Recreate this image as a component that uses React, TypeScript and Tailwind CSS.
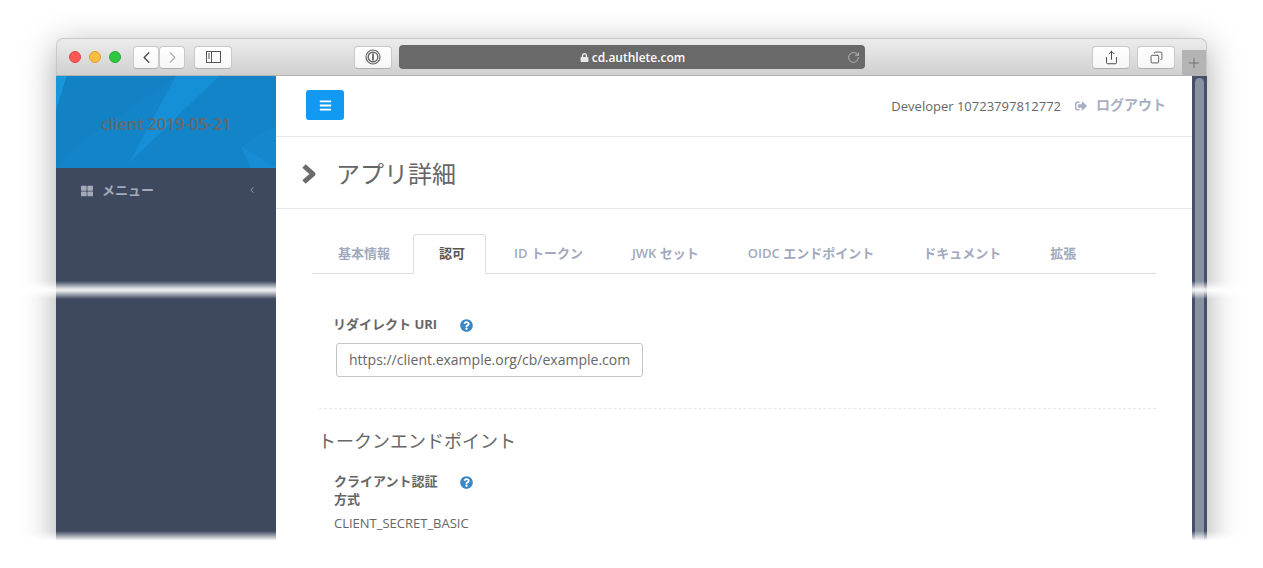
import { ChevronLeft, ChevronRight, RotateCw, Share, Copy, Plus } from "lucide-react";
import { FaBars, FaLock, FaQuestionCircle, FaSignOutAlt, FaThLarge } from "react-icons/fa";

const font = "font-['Open_Sans','Noto_Sans_CJK_JP',sans-serif]";

function ToolButton({ className, children }: { className: string; children: React.ReactNode }) {
  return (
    <div className={`h-[23px] shrink-0 flex items-center justify-center rounded-[4px] bg-[linear-gradient(#ffffff,#f6f6f6)] border border-[#c9c9c9] border-b-[#b0b0b0] ${className}`}>
      {children}
    </div>
  );
}

function Toolbar() {
  return (
    <div className="h-[38px] shrink-0 flex items-center rounded-t-[7px] border-t border-x border-[#c8c8c8] border-b border-b-[#b2b2b2] bg-[linear-gradient(#ececec,#d0d0d0)] relative">
      <div className="ml-[12px] flex gap-2">
        <span className="w-3 h-3 rounded-full bg-[#fc5753] border border-[#df4744]" />
        <span className="w-3 h-3 rounded-full bg-[#fdbc40] border border-[#de9f34]" />
        <span className="w-3 h-3 rounded-full bg-[#2ec840] border border-[#27aa35]" />
      </div>
      <div className="ml-[12px] flex">
        <ToolButton className="w-[26px]"><ChevronLeft size={19} strokeWidth={1.6} color="#444" /></ToolButton>
        <ToolButton className="w-[26px]"><ChevronRight size={19} strokeWidth={1.4} color="#aaa" /></ToolButton>
      </div>
      <ToolButton className="ml-[9px] w-[38px]">
        <svg width="15" height="12" viewBox="0 0 15 12" fill="none" stroke="#555">
          <rect x="0.5" y="0.5" width="14" height="11" />
          <path d="M5.5 0.5V11.5M2 3H4M2 5H4M2 7H4" />
        </svg>
      </ToolButton>
      <ToolButton className="ml-[122px] w-[38px]">
        <svg width="16" height="16" viewBox="0 0 16 16" fill="none" stroke="#666">
          <circle cx="8" cy="8" r="7" strokeWidth="1.2" />
          <circle cx="8" cy="8" r="4.8" strokeWidth="1.4" />
          <path d="M8 4.6V11.4" strokeWidth="1.8" />
        </svg>
      </ToolButton>
      <div className="ml-[7px] w-[466px] h-[24px] shrink-0 rounded-[4px] bg-[#696969] flex items-center text-white">
        <div className="flex-1 flex items-center justify-center gap-[3px] pl-[19px] pt-[1px]">
          <FaLock size={9} color="#e8e8e8" />
          <span className={`text-[12px] font-semibold ${font}`}>cd.authlete.com</span>
        </div>
        <RotateCw size={13} strokeWidth={1.3} color="#cfcfcf" className="mr-[5px]" />
      </div>
      <ToolButton className="ml-[227px] w-[38px]"><Share size={15} strokeWidth={1.4} color="#333" /></ToolButton>
      <ToolButton className="ml-[7px] w-[38px]"><Copy size={13} strokeWidth={1.4} color="#333" className="-scale-x-100" /></ToolButton>
      <div className="ml-[7px] mt-[12px] w-[24px] h-[26px] shrink-0 bg-[#b4b4b4] flex items-center justify-center">
        <Plus size={16} strokeWidth={1} color="#555" />
      </div>
    </div>
  );
}

function Sidebar() {
  return (
    <aside className="w-[220px] shrink-0 bg-[#3e495f] flex flex-col">
      <div className="h-[92px] bg-[#1484c8] relative flex items-center justify-center">
        <svg className="absolute inset-0" width="220" height="92" viewBox="0 0 220 92">
          <polygon points="0,0 11,0 0,34" fill="#1896dc" />
          <polygon points="120,0 163,0 73,87" fill="#1590d8" />
          <polygon points="220,50 185,70 220,92" fill="#1588cd" />
          <polygon points="185,70 220,92 195,92" fill="#168dd5" />
          <polygon points="11,0 0,34 0,92 20,70 120,0" fill="#1382c5" />
        </svg>
        <span className={`relative text-[16px] font-semibold text-[#686868] mt-[4px] ${font}`}>client 2019-05-21</span>
      </div>
      <div className="h-[46px] flex items-center pl-[25px] pr-[19px]">
        <FaThLarge size={12} color="#a3aab8" />
        <span className={`ml-[9px] text-[13px] font-semibold text-[#a3aab8] ${font}`}>メニュー</span>
        <ChevronLeft size={10} color="#a3aab8" className="ml-auto -mt-[3px]" />
      </div>
    </aside>
  );
}

const tabs = ["基本情報", "認可", "ID トークン", "JWK セット", "OIDC エンドポイント", "ドキュメント", "拡張"];

function Tabs() {
  return (
    <div className="ml-[36px] mr-[36px] mt-[25px] h-[40px] flex pl-[1px] border-b border-[#dddddd]">
      {tabs.map((t) =>
        t === "認可" ? (
          <div key={t} className={`h-[40px] -ml-[1px] mr-[3px] pl-[25px] pr-[20px] flex items-center rounded-t-[4px] border border-[#dddddd] border-b-white bg-white text-[13px] font-semibold text-[#555555] ${font}`}>{t}</div>
        ) : (
          <div key={t} className={`h-[39px] pl-[25px] pr-[21px] mr-[3px] flex items-center text-[13px] font-semibold text-[#a2a9bd] ${font}`}>{t}</div>
        )
      )}
    </div>
  );
}

function Help({ className }: { className: string }) {
  return <FaQuestionCircle size={13} color="#3b87c8" className={className} />;
}

export default function App() {
  return (
    <div className={`relative w-[1263px] h-[568px] overflow-hidden bg-white ${font}`}>
      <div className="mt-[38px] ml-[56px] w-[1151px] h-[530px] flex flex-col shadow-[0_8px_34px_rgba(0,0,0,0.34)] rounded-t-[7px] bg-white">
        <Toolbar />
        <div className="flex flex-1 min-h-0">
          <Sidebar />
          <main className="flex-1 min-w-0 bg-white">
            <header className="h-[61px] flex items-center border-b border-[#e7e7e7] pl-[30px] pr-[26px]">
              <div className="w-[38px] h-[30px] -mt-[2px] rounded-[3px] bg-[#129af2] flex items-center justify-center">
                <FaBars size={13} color="#fff" />
              </div>
              <span className="ml-auto text-[13px] text-[#666666] mt-[1px]">Developer 10723797812772</span>
              <FaSignOutAlt size={12} color="#a8afc2" className="ml-[14px] -mt-[1px]" />
              <span className="ml-[9px] text-[14px] font-semibold text-[#a8afc2] -mt-[3px]">ログアウト</span>
            </header>
            <div className="h-[72px] flex items-center border-b border-[#e7e7e7] pl-[25px]">
              <svg width="16" height="22" viewBox="0 0 16 22" fill="none" stroke="#6b6b6b" strokeWidth="5" strokeLinejoin="round" className="mt-[3px]">
                <path d="M3 3L12 11L3 19" />
              </svg>
              <h1 className="ml-[19px] mt-[3px] text-[24px] font-normal text-[#666666] leading-none">アプリ詳細</h1>
            </div>
            <Tabs />
            <div className="pl-[43px] pr-[36px]">
              <div className="mt-[41px] pl-[15px] flex items-start">
                <span className="w-[126px] -ml-[1px] text-[13px] font-bold text-[#666666] leading-[18px]">リダイレクト URI</span>
                <Help className="mt-[4px] ml-[1px]" />
              </div>
              <div className="mt-[10px] ml-[17px] w-[307px] h-[34px] rounded-[3px] border border-[#c4c4c4] flex items-center pl-[12px] pb-[1px] text-[14px] text-[#666666]">
                https://client.example.org/cb/example.com
              </div>
              <div className="mt-[31px] border-t border-dashed border-[#e8e8e8]" />
              <h2 className="mt-[20px] -ml-[1px] text-[18px] font-normal leading-[24px] text-[#666666]">トークンエンドポイント</h2>
              <div className="mt-[19px] pl-[15px] flex items-start">
                <span className="w-[126px] pr-[18px] text-[13px] font-bold text-[#666666] leading-[18px]">クライアント認証方式</span>
                <Help className="mt-[4px]" />
              </div>
              <div className="mt-[6px] pl-[15px] text-[13px] leading-[18px] text-[#666666]">CLIENT_SECRET_BASIC</div>
            </div>
          </main>
          <div className="w-[15px] shrink-0 bg-[#44506a] pt-[2px] flex justify-center">
            <div className="w-[9px] h-full rounded-full bg-[#8a92a2]" />
          </div>
        </div>
      </div>
      <div className="absolute left-0 right-0 top-[281px] h-[18px] bg-[linear-gradient(rgba(255,255,255,0),rgba(255,255,255,0.88)_45%,rgba(255,255,255,0.88)_55%,rgba(255,255,255,0))]" />
      <div className="absolute left-0 right-0 top-[531px] h-[37px] bg-[linear-gradient(rgba(255,255,255,0),#ffffff_26%)]" />
    </div>
  );
}
